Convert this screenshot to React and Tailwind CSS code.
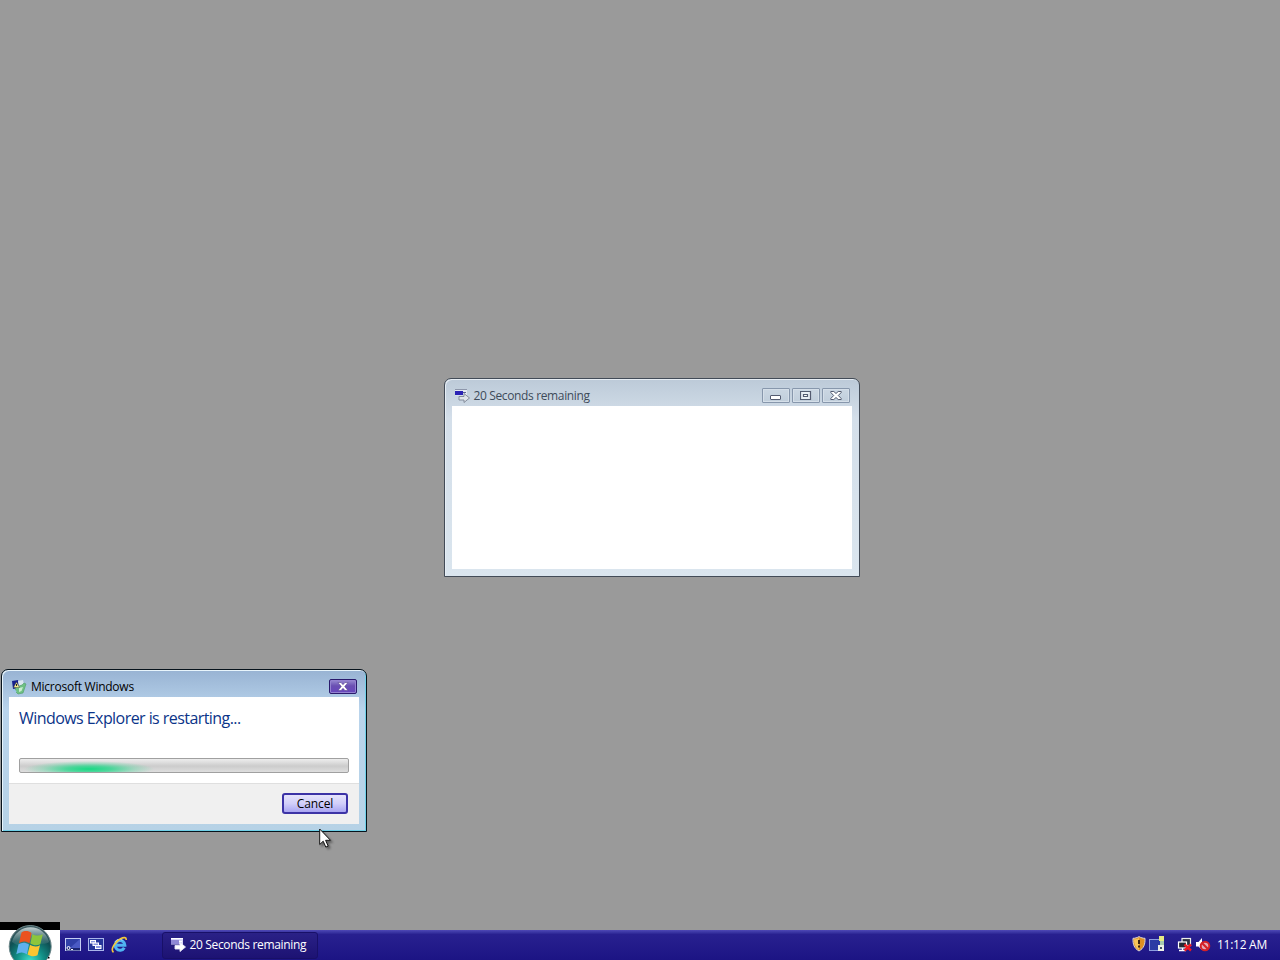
import clsx from 'clsx';

function RunIcon({ light }) {
  return (
    <svg width="16" height="16" viewBox="0 0 16 16" className="shrink-0">
      <path d="M1 1.500h12v6H1z" fill={light ? '#d9d6f7' : '#e3e8f1'} />
      <path d="M1 1.500h12" stroke={light ? '#fff' : '#8d96ab'} />
      <rect x="1" y="3" width="8" height="4" fill={light ? '#8f88d6' : '#2a22b4'} />
      <path d="M9 4.500h3" stroke={light ? '#fff' : '#5d6592'} />
      <path d="M5 8.500h5V5.500l5.500 4.500L10 14.500v-2.500H5z" fill={light ? '#fff' : '#e0e5ea'} stroke={light ? '#e9e8fb' : '#7c8594'} strokeWidth="0.900" />
    </svg>
  );
}

function ErrorReportIcon() {
  return (
    <svg width="16" height="16" viewBox="0 0 16 16" className="shrink-0">
      <path d="M1 2l6-1 1 8-6 1z" fill="#17208c" />
      <path d="M7 2l5-1 1 5-5 1z" fill="#dbe6f0" />
      <path d="M5 8l6-2 2-2 2 1-3 9-5 1-3-3z" fill="#6fc083" stroke="#4d9d66" strokeWidth="0.600" />
      <path d="M8 9l4-1-1.500 4-2.500 1z" fill="#c9edcf" />
      <path d="M5.500 3l3 5.500H2.500z" fill="#f3e98c" stroke="#333" strokeWidth="0.400" />
      <path d="M5.500 5v2" stroke="#222" />
      <path d="M2 10.500l3 2.500" stroke="#9fc4ea" strokeWidth="2" />
    </svg>
  );
}

function CaptionButton({ children }) {
  return (
    <button className="flex h-[15px] w-7 items-center justify-center rounded-[1px] border border-[#8797ac] bg-linear-to-b from-[#cbd7e3] to-[#c0cedb] shadow-[inset_0_0_0_1px_#d5dfe9]">
      {children}
    </button>
  );
}

function CountdownWindow() {
  return (
    <div className="absolute top-[378px] left-[444px] flex h-[199px] w-[416px] flex-col rounded-t-[7px] border border-[#424b57] bg-linear-to-b from-[#bccad8] via-[#d4dfea] via-20% to-[#dae5ee] px-[7px] pb-[7px] shadow-[inset_1px_1px_0_#e6edf4]">
      <div className="flex h-[27px] items-center pt-[6px] pr-0.5 pl-0.5">
        <RunIcon />
        <span className="ml-[3.500px] flex-1 pt-px text-[12px] leading-4 tracking-[-0.36px] whitespace-nowrap text-[#3e4b5a]">
          20 Seconds remaining
        </span>
        <div className="flex gap-0.5">
          <CaptionButton>
            <svg width="12" height="11" viewBox="0 0 12 11">
              <rect x="0.500" y="5.500" width="10" height="4" rx="0.500" fill="#fff" stroke="#535b70" />
            </svg>
          </CaptionButton>
          <CaptionButton>
            <svg width="12" height="11" viewBox="0 0 12 11">
              <path d="M0.500 1.500h10v8H0.500z" fill="#e9eef4" stroke="#535b70" strokeWidth="1.200" />
              <path d="M3.500 4.500h4v2h-4z" fill="#fff" stroke="#535b70" strokeWidth="1.200" />
            </svg>
          </CaptionButton>
          <CaptionButton>
            <svg width="13" height="11" viewBox="0 0 13 11">
              <path d="M0.800 1.500h3l2.200 2 2.200-2h3v1L8.300 5.500l2.900 3v1h-3l-2.200-2-2.200 2h-3v-1l2.900-3-2.900-3z" fill="#fff" stroke="#535b70" />
            </svg>
          </CaptionButton>
        </div>
      </div>
      <div className="flex-1 bg-white" />
    </div>
  );
}

function RestartDialog() {
  return (
    <div className="absolute top-[669px] left-px flex h-[163px] w-[366px] flex-col rounded-t-[7px] border border-[#07131c] bg-linear-to-b from-[#98b3d3] via-[#b9d4ec] via-25% to-[#b6d2e6] px-[7px] pb-[7px] shadow-[inset_1px_1px_0_#e8f5fc,inset_-1px_-1px_0_#6fd0e8]">
      <div className="flex h-[27px] items-center pt-[6px] pr-0.5 pl-0.5">
        <ErrorReportIcon />
        <span className="ml-1 flex-1 pt-px text-[12px] leading-4 tracking-[-0.25px] whitespace-nowrap text-black">
          Microsoft Windows
        </span>
        <button className="flex h-[15px] w-7 items-center justify-center rounded-[2px] border border-[#2a1a6c] bg-linear-to-b from-[#9a8cd2] via-[#6a4fb2] via-45% to-[#6846be] shadow-[inset_0_0_0_1px_#9482d0]">
          <svg width="12" height="9" viewBox="0 0 12 9">
            <path d="M1 0.500h3l2 2.200 2-2.200h3L7.700 4.500 11 8.500H8L6 6.300 4 8.500H1l3.300-4z" fill="#fff" stroke="#4a3584" strokeWidth="0.500" />
          </svg>
        </button>
      </div>
      <div className="h-[86px] bg-white px-2.5 pt-2.5">
        <p className="text-[16px] leading-[22px] tracking-[-0.56px] whitespace-nowrap text-[#0b3489]">
          Windows Explorer is restarting...
        </p>
        <div className="relative mt-[29px] h-[15px] overflow-hidden rounded-[2px] border border-[#a0a0a0] bg-linear-to-b from-[#eeeeee] via-[#cccccc] via-55% to-[#dedede]">
          <div className="absolute top-0 left-1 h-[13px] w-[130px] bg-[radial-gradient(ellipse_65px_8px_at_65px_10px,#18d983_0%,#2bd68ccc_35%,#3fd79655_70%,#3fd79600_100%)]" />
        </div>
      </div>
      <div className="flex flex-1 items-start justify-end border-t border-[#dfdfdf] bg-[#f0f0f0] pt-[9px] pr-[11px]">
        <button className="h-[21px] w-[66px] rounded-[3px] border-2 border-[#3c33a6] bg-linear-to-b from-[#e6e4fb] via-[#d2cffa] via-50% to-[#a9a5f2] text-[12px] leading-[17px] tracking-[-0.1px] text-black">
          Cancel
        </button>
      </div>
    </div>
  );
}

function StartOrb() {
  return (
    <svg width="60" height="38" viewBox="0 0 60 38">
      <defs>
        <radialGradient id="orb" cx="50%" cy="85%" r="80%">
          <stop offset="0" stopColor="#3fe0cc" />
          <stop offset="0.400" stopColor="#128f86" />
          <stop offset="0.750" stopColor="#0f5054" />
          <stop offset="1" stopColor="#3c5a60" />
        </radialGradient>
        <linearGradient id="gloss" x1="0" y1="0" x2="0" y2="1">
          <stop offset="0" stopColor="#cfdbdc" stopOpacity="0.900" />
          <stop offset="1" stopColor="#6f9295" stopOpacity="0.150" />
        </linearGradient>
      </defs>
      <path d="M0 0h60v8H0z" fill="#000" />
      <path d="M0 8h60v30H0z" fill="#fff" />
      <circle cx="30.200" cy="24.500" r="21" fill="url(#orb)" stroke="#6c8588" />
      <path d="M12 20a19 19 0 0 1 37 0c-8 5-11-2-18 1-7 3-13 4-19-1z" fill="url(#gloss)" />
      <path d="M21.500 10.500c3-2 6.800-2 10 .500l-2 10.300c-3.500-2.300-7-2.500-10.500-.3z" fill="#ea5220" />
      <path d="M32.500 12c3 2 6.800 2 10.300.2l-2.500 10c-3.400 1.700-6.700 1.300-10-.7z" fill="#8cc63c" />
      <path d="M18.500 22.200c3.400-2.200 7-2 10.500.2l-2.200 9.800c-3.500-2.200-7-2.200-10.500 0z" fill="#5fb0ee" />
      <path d="M30 22.800c3.300 2 6.600 2.300 10 .5l-2.500 10c-3.500 1.700-6.700 1.200-9.900-.8z" fill="#fbc531" />
      <path d="M48 35h1.500v1.500H48z" fill="#000" />
    </svg>
  );
}

function ShowDesktopIcon() {
  return (
    <svg width="16" height="14" viewBox="0 0 16 14">
      <rect x="0.500" y="0.500" width="15" height="12" fill="#3040a8" stroke="#c5cdf4" />
      <path d="M15 1v9H5z" fill="#4a5ac4" />
      <path d="M1 10h14v2.500H1z" fill="#1a2470" />
      <circle cx="3.500" cy="10" r="1.500" fill="none" stroke="#fff" />
      <path d="M6 11.500h2" stroke="#fff" />
    </svg>
  );
}

function SwitchWindowsIcon() {
  return (
    <svg width="16" height="14" viewBox="0 0 16 14">
      <rect x="0.500" y="0.500" width="15" height="12" fill="#26369a" stroke="#aab5ea" />
      <rect x="2.500" y="2.500" width="5" height="2.500" fill="#8d9ae2" stroke="#fff" />
      <rect x="5" y="5" width="5.500" height="2.500" fill="#8d9ae2" stroke="#fff" />
      <rect x="7.500" y="7.500" width="5.500" height="3" fill="#8d9ae2" stroke="#fff" />
    </svg>
  );
}

function ExplorerIcon() {
  return (
    <svg width="18" height="18" viewBox="0 0 18 18">
      <path d="M13.300 11.700A4.900 4.900 0 1 1 13.900 9.300H5" fill="none" stroke="#4fb4f2" strokeWidth="3" />
      <path d="M4 5.800A5.500 5.500 0 0 1 11.500 4.200" fill="none" stroke="#b5e4ff" strokeWidth="1" />
      <path d="M2.500 16.300C-1 13.500 4 6 9.500 2.800c3.500-1.900 6-1.600 5.700 1.200" fill="none" stroke="#f5c93a" strokeWidth="1.600" />
    </svg>
  );
}

function ShieldIcon() {
  return (
    <svg width="14" height="16" viewBox="0 0 14 16">
      <path d="M7 .6c2 1.200 4 1.700 6 1.700.3 6-1.200 10-6 12.700C2.200 12.300.7 8.300 1 2.300c2 0 4-.5 6-1.700z" fill="#dd8f22" stroke="#d5d2dc" />
      <path d="M7 2v12C3.500 11.500 2 8.500 2 3.300 4 3.200 5.500 2.800 7 2z" fill="#f7c55a" />
      <path d="M7 4v4M7 9.500v2" stroke="#3b2410" strokeWidth="2" />
    </svg>
  );
}

function DeviceIcon() {
  return (
    <svg width="16" height="18" viewBox="0 0 16 18">
      <rect x="0.500" y="4.500" width="11" height="11" fill="#2c3ca4" stroke="#8c9ee0" />
      <path d="M10 1h5v5h-5z" fill="#e6eb83" />
      <path d="M11 6h4v4h-4z" fill="#a9c9b0" />
      <path d="M9 10h6v6H9z" fill="#edf0e6" />
      <path d="M11 12h2v2h-2z" fill="#444e68" />
    </svg>
  );
}

function NetworkIcon() {
  return (
    <svg width="16" height="16" viewBox="0 0 16 16">
      <rect x="5" y="1.500" width="8.500" height="7" fill="#2a3040" stroke="#eef0ea" strokeWidth="1.200" />
      <rect x="1.500" y="5" width="8" height="6" fill="#232936" stroke="#fff" strokeWidth="1.200" />
      <path d="M2 13.500h7M5.500 11v2" stroke="#fff" strokeWidth="1.300" />
      <path d="M7.500 7.500l6.500 6M14 7.500l-6.500 6" stroke="#ee1a22" strokeWidth="2.400" />
    </svg>
  );
}

function MutedIcon() {
  return (
    <svg width="17" height="16" viewBox="0 0 17 16">
      <path d="M1 5h2.500L7 1v12L3.500 9.500H1z" fill="#fff" />
      <circle cx="10" cy="9" r="4.300" fill="#e5a9b5" stroke="#d42027" strokeWidth="2" />
      <path d="M7 6l6 6" stroke="#d42027" strokeWidth="2.200" />
    </svg>
  );
}

function TaskButton({ active, children }) {
  return (
    <button
      className={clsx(
        'flex h-[27px] w-[156px] items-center rounded-[3px] border pb-px pl-[7px] text-white',
        active ? 'border-[#181068] bg-linear-to-b from-[#2a2187] to-[#1d1273]' : 'border-transparent'
      )}
    >
      {children}
    </button>
  );
}

function Taskbar() {
  return (
    <div className="absolute bottom-0 left-0 flex h-[38px] w-full items-end">
      <StartOrb />
      <div className="flex h-[30px] flex-1 items-center bg-linear-to-b from-[#4f49b6] via-[#28208f] via-15% to-[#1c1484]">
        <div className="flex w-[102px] items-center gap-[7px] pl-[5px]">
          <ShowDesktopIcon />
          <SwitchWindowsIcon />
          <ExplorerIcon />
        </div>
        <TaskButton active>
          <RunIcon light />
          <span className="ml-[3.500px] text-[12px] leading-4 tracking-[-0.34px] whitespace-nowrap">20 Seconds remaining</span>
        </TaskButton>
        <div className="ml-auto flex items-center pr-[13px] text-white">
          <span className="-mt-0.5"><ShieldIcon /></span>
          <span className="-mt-[3px] ml-[3px]"><DeviceIcon /></span>
          <span className="-mt-px ml-3"><NetworkIcon /></span>
          <span className="-mt-px ml-0.5"><MutedIcon /></span>
          <span className="ml-[5px] text-[12px] leading-4 tracking-[-0.26px] whitespace-nowrap">11:12 AM</span>
        </div>
      </div>
    </div>
  );
}

function Cursor() {
  return (
    <svg width="14" height="22" viewBox="0 0 14 22" className="absolute top-[828px] left-[319px] drop-shadow-[2px_2px_1px_#0006]">
      <path d="M.7 1v15.500l3.500-3.300 2.600 5.900 2.400-1-2.600-5.800h4.900z" fill="#fff" stroke="#111" strokeWidth="1" />
    </svg>
  );
}

export default function App() {
  return (
    <div className="relative h-[960px] w-[1280px] overflow-hidden bg-[#9a9a9a] font-['Open_Sans','Noto_Sans',sans-serif] select-none">
      <CountdownWindow />
      <RestartDialog />
      <Taskbar />
      <Cursor />
    </div>
  );
}
